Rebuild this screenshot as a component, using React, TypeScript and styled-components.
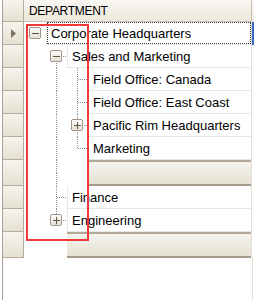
import React, { useId } from 'react'
import styled, { createGlobalStyle } from 'styled-components'

const GlobalStyle = createGlobalStyle`
  html, body {
    margin: 0;
    padding: 0;
    background: #ffffff;
  }
  body {
    font-family: "Liberation Sans", Arial, sans-serif;
    color: #000000;
  }
`

const HEADER_H = 22
const ROW_H = 23
const FOOTER_H = 26
const SLOT_W = 21

type Slot = { up?: boolean; down?: boolean; right?: boolean; box?: 'plus' | 'minus' }

type RowData =
  | { kind: 'node'; text: string; level: number; focused?: boolean; slots: Slot[] }
  | { kind: 'footer'; level: number; slots: Slot[] }

const rows: RowData[] = [
  { kind: 'node', text: 'Corporate Headquarters', level: 0, focused: true, slots: [{ box: 'minus' }] },
  { kind: 'node', text: 'Sales and Marketing', level: 1, slots: [{}, { box: 'minus', down: true, right: true }] },
  { kind: 'node', text: 'Field Office: Canada', level: 2, slots: [{}, { up: true, down: true }, { up: true, down: true, right: true }] },
  { kind: 'node', text: 'Field Office: East Coast', level: 2, slots: [{}, { up: true, down: true }, { up: true, down: true, right: true }] },
  { kind: 'node', text: 'Pacific Rim Headquarters', level: 2, slots: [{}, { up: true, down: true }, { up: true, down: true, right: true, box: 'plus' }] },
  { kind: 'node', text: 'Marketing', level: 2, slots: [{}, { up: true, down: true }, { up: true, right: true }] },
  { kind: 'footer', level: 2, slots: [{}, { up: true, down: true }, {}] },
  { kind: 'node', text: 'Finance', level: 1, slots: [{}, { up: true, down: true, right: true }] },
  { kind: 'node', text: 'Engineering', level: 1, slots: [{}, { up: true, right: true, box: 'plus' }] },
  { kind: 'footer', level: 1, slots: [{}, {}] },
]

const Frame = styled.div`
  position: relative;
  width: 254px;
  height: 300px;
  overflow: hidden;
  background: #ffffff;
`

const Grid = styled.div`
  margin-left: 2px;
  height: 300px;
  border-left: 1px solid #a8a094;
  display: flex;
  flex-direction: column;
`

const Row = styled.div<{ $h: number }>`
  display: flex;
  height: ${({ $h }) => $h}px;
  flex: none;
`

const Indicator = styled.div`
  width: 21px;
  flex: none;
  box-sizing: border-box;
  border-right: 1px solid #b7ab9c;
  border-bottom: 1px solid #b7ab9c;
  background: linear-gradient(#f6f4ee, #e5e0d2);
  display: flex;
  align-items: center;
  justify-content: center;
`

const HeaderCell = styled.div`
  width: 228px;
  flex: none;
  box-sizing: border-box;
  padding-left: 5px;
  display: flex;
  align-items: center;
  border-right: 1px solid #c5bdac;
  border-bottom: 1px solid #cbc4b4;
  background: linear-gradient(#f8f7f2, #ebe7db);
  font-size: 12px;
  letter-spacing: -0.3px;
`

const TreeColumn = styled.div`
  width: 228px;
  flex: none;
  box-sizing: border-box;
  padding-left: 1px;
  display: flex;
  border-right: 1px solid #e2dfd5;
`

const Cell = styled.div`
  flex: 1;
  min-width: 0;
  box-sizing: border-box;
  border-left: 1px solid #ebe8df;
  border-bottom: 1px solid #ebe8df;
  display: flex;
`

const CellText = styled.div<{ $focused?: boolean }>`
  flex: 1;
  box-sizing: border-box;
  display: flex;
  align-items: center;
  padding-left: 3px;
  font-size: 13px;
  white-space: nowrap;
  border: 1px dotted ${({ $focused }) => ($focused ? '#3c3c3c' : 'transparent')};
`

const FooterBand = styled.div`
  flex: 1;
  box-sizing: border-box;
  border-top: 2px solid #b3a798;
  border-bottom: 2px solid #a69a8b;
  background: linear-gradient(#f6f4ee, #e6e1d3);
`

const NextColumn = styled.div<{ $selected?: boolean; $header?: boolean }>`
  flex: 1;
  background: ${({ $selected, $header }) =>
    $selected ? '#316ac5' : $header ? 'linear-gradient(#fbfaf6, #efece2)' : '#ffffff'};
`

const Filler = styled.div`
  flex: 1;
  display: flex;
`

const FillerGap = styled.div`
  width: 249px;
  flex: none;
  border-right: 1px solid #e2dfd5;
`

const Marker = styled.div`
  position: absolute;
  left: 26px;
  top: 24px;
  width: 63px;
  height: 217px;
  box-sizing: border-box;
  border: 2px solid #f03a3a;
  pointer-events: none;
`

const TreeSlot: React.FC<{ slot: Slot; height: number }> = ({ slot, height }) => {
  const gid = useId()
  const cy = Math.floor((height - 1) / 2) + 0.5
  const lx = 10.5
  return (
    <svg width={SLOT_W} height={height} style={{ flex: 'none', display: 'block' }}>
      <defs>
        <linearGradient id={gid} x1="0" y1="0" x2="0" y2="1">
          <stop offset="0" stopColor="#ffffff" />
          <stop offset="1" stopColor="#e4ded0" />
        </linearGradient>
      </defs>
      <g stroke="#8f8f8f" strokeWidth="1" strokeDasharray="1 1" shapeRendering="crispEdges">
        {slot.up && <line x1={lx} y1={0} x2={lx} y2={cy} />}
        {slot.down && <line x1={lx} y1={cy} x2={lx} y2={height} />}
        {slot.right && <line x1={lx} y1={cy} x2={SLOT_W} y2={cy} />}
      </g>
      {slot.box && (
        <g shapeRendering="crispEdges">
          <rect x={4.5} y={cy - 6} width={11} height={11} rx={2} fill={`url(#${gid})`} stroke="#a3958a" />
          <line x1={7} y1={cy - 0.5} x2={14} y2={cy - 0.5} stroke="#5e5347" />
          {slot.box === 'plus' && <line x1={10.5} y1={cy - 4} x2={10.5} y2={cy + 3} stroke="#5e5347" />}
        </g>
      )}
    </svg>
  )
}

const Arrow = () => (
  <svg width="5" height="9" viewBox="0 0 5 9">
    <path d="M0 0 L5 4.5 L0 9 Z" fill="#7d7264" />
  </svg>
)

const TreeRow: React.FC<{ row: RowData }> = ({ row }) => {
  const h = row.kind === 'footer' ? FOOTER_H : ROW_H
  return (
    <Row $h={h}>
      <Indicator>{row.kind === 'node' && row.focused && <Arrow />}</Indicator>
      <TreeColumn>
        {row.slots.map((s, i) => (
          <TreeSlot key={i} slot={s} height={h} />
        ))}
        {row.kind === 'node' ? (
          <Cell>
            <CellText $focused={row.focused}>{row.text}</CellText>
          </Cell>
        ) : (
          <FooterBand />
        )}
      </TreeColumn>
      <NextColumn $selected={row.kind === 'node' && row.focused} />
    </Row>
  )
}

export default function App() {
  return (
    <Frame>
      <GlobalStyle />
      <Grid>
        <Row $h={HEADER_H}>
          <Indicator />
          <HeaderCell>DEPARTMENT</HeaderCell>
          <NextColumn $header />
        </Row>
        {rows.map((r, i) => (
          <TreeRow key={i} row={r} />
        ))}
        <Filler>
          <FillerGap />
        </Filler>
      </Grid>
      <Marker />
    </Frame>
  )
}
